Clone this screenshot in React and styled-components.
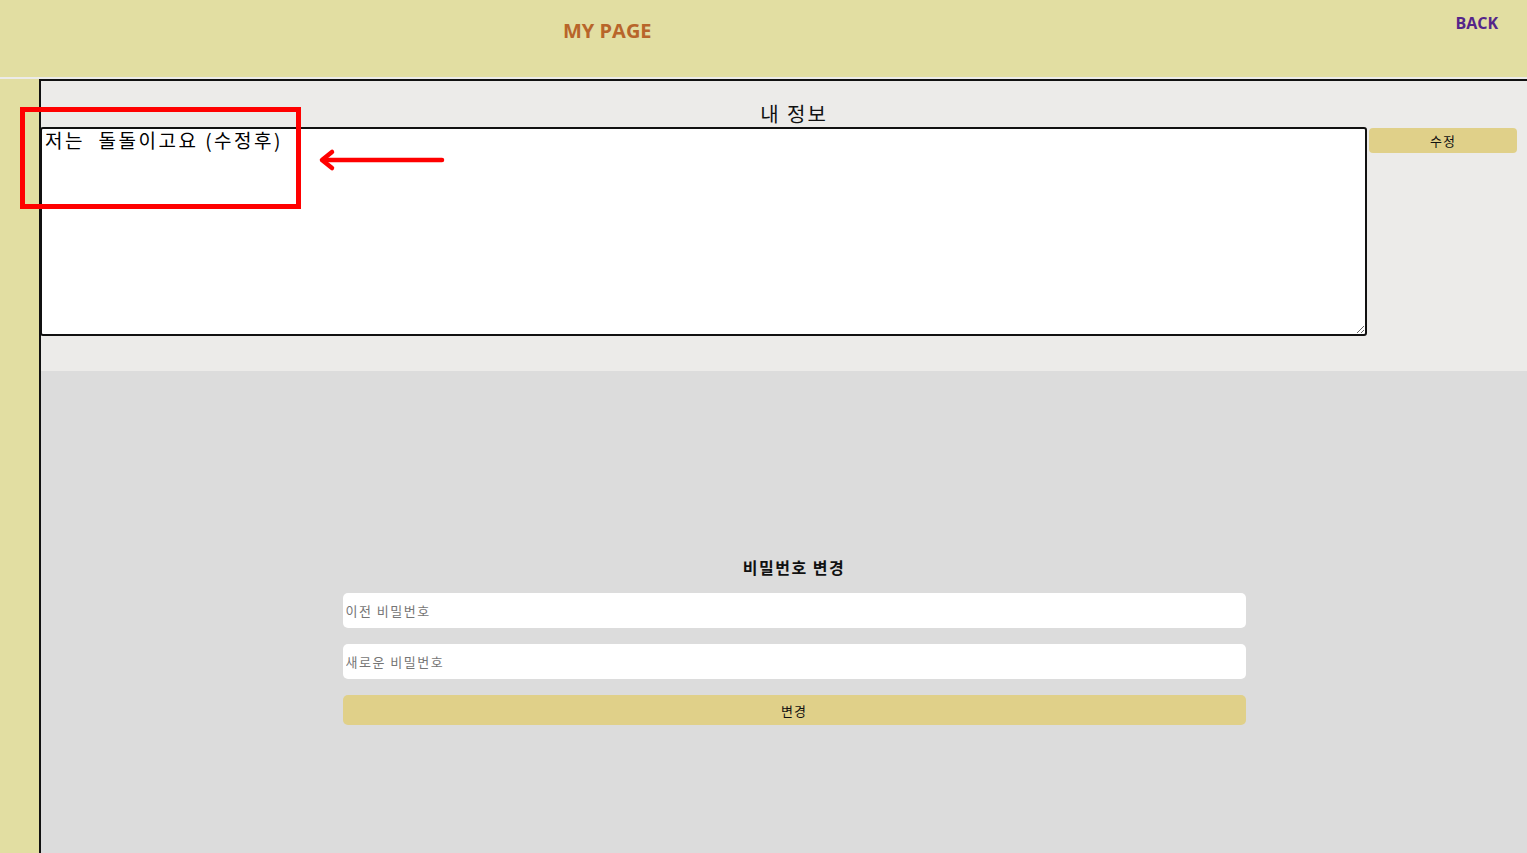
import styled, { createGlobalStyle } from "styled-components";

const GlobalStyle = createGlobalStyle`
    body {
        margin: 0;
        background-color: #ecebe9;
        overflow: hidden;
        font-family: 'Open Sans', 'Noto Sans CJK KR', sans-serif;
    }
`

const Header = styled.header`
    height: 77px;
    margin-bottom: 2px;
    background-color: #e2dea2;
    display: flex;
    align-items: flex-start;
`

const PageTitle = styled.h1`
    margin: 16px 0 0 563px;
    font-size: 20px;
    font-weight: 700;
    color: #b8652a;
    line-height: 30px;
`

const BackLink = styled.a`
    margin: 10px 29px 0 auto;
    font-size: 16px;
    font-weight: 700;
    color: #55258a;
    line-height: 26px;
    cursor: pointer;
`

const Body = styled.div`
    display: flex;
    height: calc(100vh - 79px);
`

const Sidebar = styled.aside`
    width: 39px;
    flex-shrink: 0;
    background-color: #e2dea2;
`

const Main = styled.main`
    width: 1506px;
    flex-shrink: 0;
    border-left: 2px solid #111;
    border-top: 2px solid #111;
    display: flex;
    flex-direction: column;
`

const InfoSection = styled.section`
    padding-top: 21px;
`

const SectionTitle = styled.h2`
    margin: 0 0 1px;
    text-align: center;
    font-family: 'Noto Sans CJK KR', sans-serif;
    font-size: ${props => props.small ? "16px" : "20px"};
    font-weight: ${props => props.small ? 700 : 400};
    line-height: ${props => props.small ? "20px" : "24px"};
    letter-spacing: ${props => props.small ? "1.5px" : "2px"};
    color: #111;
`

const InfoRow = styled.div`
    display: flex;
    align-items: flex-start;
    gap: 2px;
    margin-left: -1px;
`

const InfoText = styled.textarea`
    width: 1327px;
    height: 209px;
    box-sizing: border-box;
    border: 2px solid #111;
    border-radius: 3px;
    padding: 0 3px;
    font-family: 'Noto Sans CJK KR', sans-serif;
    font-size: 19px;
    line-height: 22px;
    letter-spacing: 2.5px;
    color: #000;
    background: #fff;
    outline: none;
`

const YellowButton = styled.button`
    width: ${props => props.wide ? "100%" : "148px"};
    height: ${props => props.wide ? "30px" : "25px"};
    margin-top: ${props => props.wide ? "0" : "1px"};
    border: none;
    border-radius: ${props => props.wide ? "5px" : "4px"};
    background-color: #e0d089;
    font-family: 'Noto Sans CJK KR', sans-serif;
    font-size: 13px;
    letter-spacing: 1px;
    color: #111;
    cursor: pointer;
`

const PasswordSection = styled.section`
    flex: 1;
    margin-top: 35px;
    background-color: #dcdcdc;
    padding-top: 186px;
    display: flex;
    flex-direction: column;
    align-items: center;
`

const PasswordForm = styled.form`
    width: 903px;
    margin-top: 15px;
    display: flex;
    flex-direction: column;
    gap: 16px;
`

const PasswordInput = styled.input`
    height: 35px;
    box-sizing: border-box;
    border: none;
    border-radius: 5px;
    padding: 0 3px;
    background: #fff;
    font-family: 'Noto Sans CJK KR', sans-serif;
    font-size: 13px;
    letter-spacing: 1.5px;
    outline: none;
    &::placeholder {
        color: #767676;
    }
`

const Highlight = styled.div`
    position: absolute;
    left: 20px;
    top: 107px;
    width: 281px;
    height: 102px;
    box-sizing: border-box;
    border: 5px solid #ff0000;
    pointer-events: none;
`

const StyledArrow = styled.svg`
    position: absolute;
    left: 316px;
    top: 148px;
    width: 132px;
    height: 24px;
    pointer-events: none;
`

const Arrow = () => (
    <StyledArrow viewBox="0 0 132 24">
        <path d="M126 12H8" stroke="#ff0000" strokeWidth="4.5" strokeLinecap="round" fill="none" />
        <path d="M16 4L6 12L16 20" stroke="#ff0000" strokeWidth="4.5" strokeLinecap="round" strokeLinejoin="round" fill="none" />
    </StyledArrow>
)

export default function App() {
    return (
        <>
            <GlobalStyle />
            <Header>
                <PageTitle>MY PAGE</PageTitle>
                <BackLink>BACK</BackLink>
            </Header>
            <Body>
                <Sidebar />
                <Main>
                    <InfoSection>
                        <SectionTitle>내 정보</SectionTitle>
                        <InfoRow>
                            <InfoText defaultValue="저는  돌돌이고요 (수정후)" />
                            <YellowButton>수정</YellowButton>
                        </InfoRow>
                    </InfoSection>
                    <PasswordSection>
                        <SectionTitle small>비밀번호 변경</SectionTitle>
                        <PasswordForm onSubmit={e => e.preventDefault()}>
                            <PasswordInput type="password" placeholder="이전 비밀번호" />
                            <PasswordInput type="password" placeholder="새로운 비밀번호" />
                            <YellowButton wide>변경</YellowButton>
                        </PasswordForm>
                    </PasswordSection>
                </Main>
            </Body>
            <Highlight />
            <Arrow />
        </>
    )
}
